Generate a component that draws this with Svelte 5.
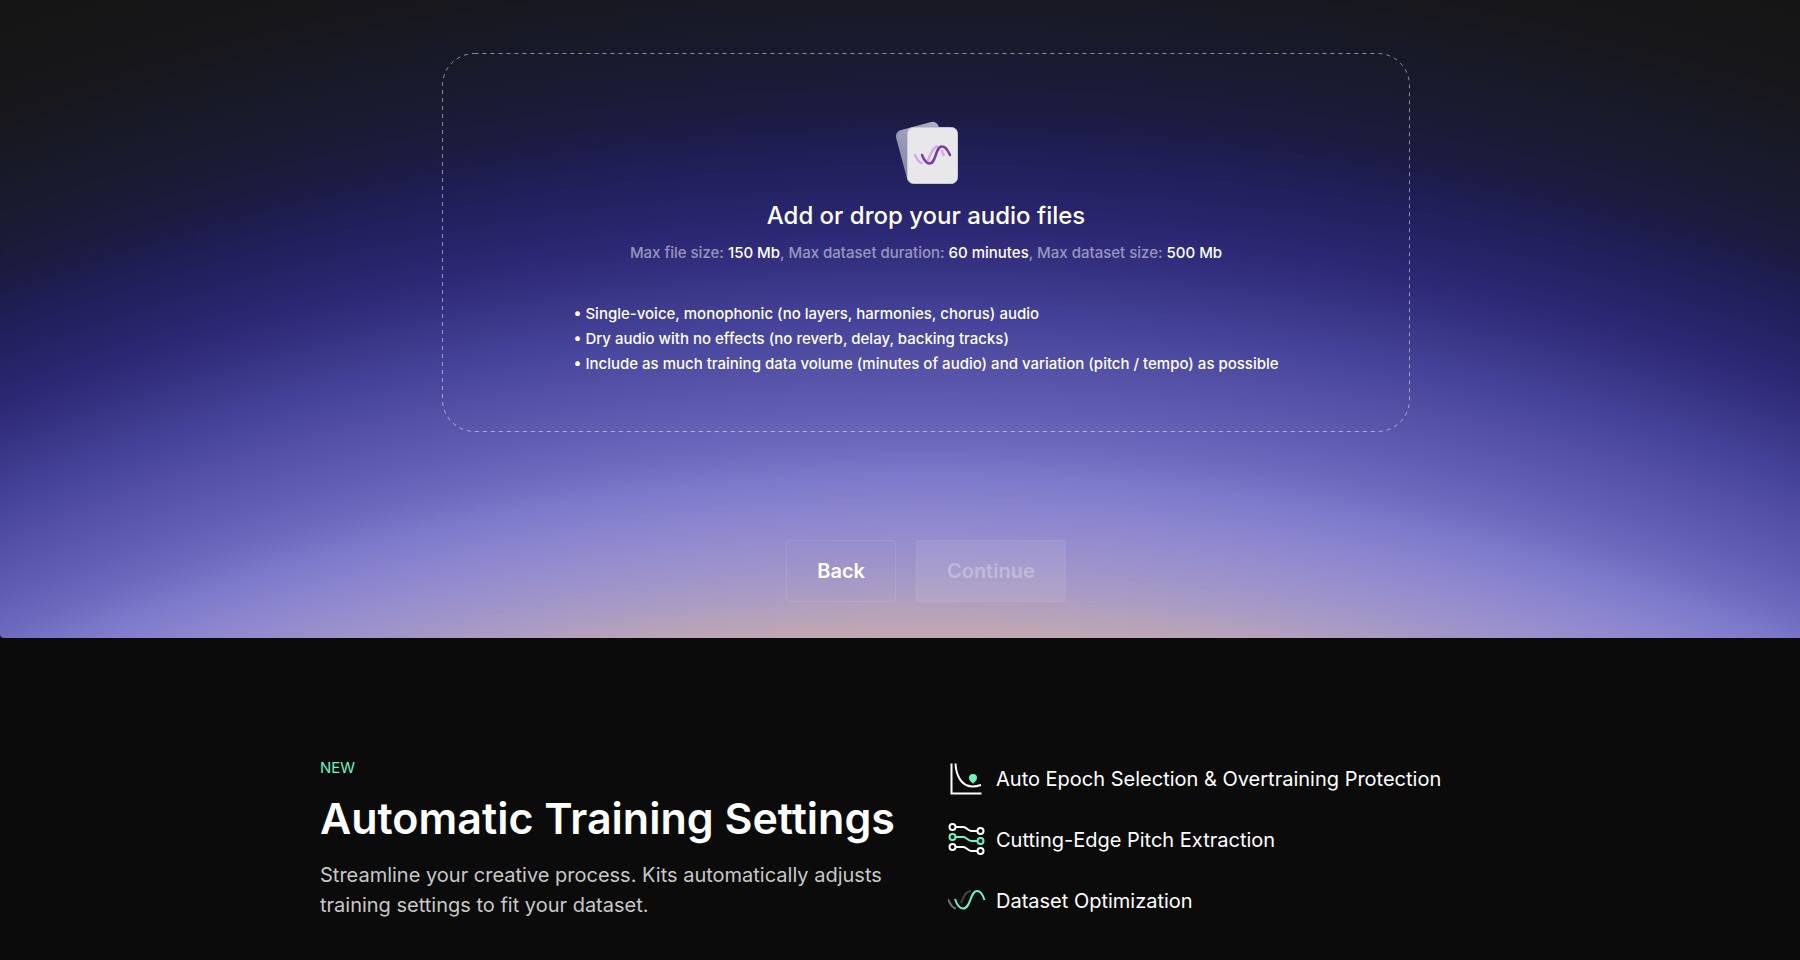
<script lang="ts">
  let files: FileList | undefined = $state();

  const limits = [
    { label: 'Max file size:', value: '150 Mb' },
    { label: 'Max dataset duration:', value: '60 minutes' },
    { label: 'Max dataset size:', value: '500 Mb' },
  ];

  const tips = [
    'Single-voice, monophonic (no layers, harmonies, chorus) audio',
    'Dry audio with no effects (no reverb, delay, backing tracks)',
    'Include as much training data volume (minutes of audio) and variation (pitch / tempo) as possible',
  ];

  const features = [
    { icon: 'curve', text: 'Auto Epoch Selection & Overtraining Protection' },
    { icon: 'nodes', text: 'Cutting-Edge Pitch Extraction' },
    { icon: 'wave', text: 'Dataset Optimization' },
  ];
</script>

<main>
  <section class="hero">
    <div class="dropzone">
      <svg class="outline" aria-hidden="true">
        <rect x="0.5" y="0.5" rx="32" />
      </svg>
      <svg width="68" height="66" viewBox="-4 0 68 66" aria-hidden="true">
        <defs>
          <linearGradient id="card-fade" x1="1" y1="0" x2="0" y2="1">
            <stop offset="0" stop-color="#b3b1c9" />
            <stop offset="1" stop-color="#8381a6" />
          </linearGradient>
        </defs>
        <rect x="5" y="5" width="44" height="54" rx="6" transform="rotate(-15 28 33)" fill="url(#card-fade)" />
        <rect x="11.5" y="7.5" width="50" height="56" rx="6" class="card-front" />
        <path class="wave-light" d="M19 35c2 4 3 7 6.5 8M32 40c3-6 4-12 9-13.5M46 31l1.5 4" />
        <path class="wave-dark" d="M26 35c2 5 4 8.5 7.5 8.5C40.5 43.5 39 26.5 46 26.5c4 0 6 4 8 8.5" />
      </svg>
      <label class="title" for="audio-files">Add or drop your audio files</label>
      <input id="audio-files" class="file-input" type="file" accept="audio/*" multiple bind:files />
      <p class="limits">
        {#each limits as limit, i}{i > 0 ? ', ' : ''}{limit.label} <strong>{limit.value}</strong>{/each}
      </p>
      <ul class="tips">
        {#each tips as tip}
          <li>{tip}</li>
        {/each}
      </ul>
    </div>
    <div class="actions">
      <button class="btn">Back</button>
      <button class="btn btn-primary" disabled={!files?.length}>Continue</button>
    </div>
  </section>

  <section class="info">
    <div class="intro">
      <span class="tag">NEW</span>
      <h2>Automatic Training Settings</h2>
      <p>Streamline your creative process. Kits automatically adjusts training settings to fit your dataset.</p>
    </div>
    <ul class="features">
      {#each features as feature}
        <li>
          <svg width="38" height="36" viewBox="0 0 38 36" aria-hidden="true">
            {#if feature.icon === 'curve'}
              <path class="line" d="M3.5 2.5v30h30" />
              <path class="line" d="M7.5 2.5C8 14 13 25 24 25.5c4 .2 6-.5 9-1.5" />
              <path class="pin" d="M25 13a4 4 0 0 1 4 4c0 2.5-2.2 3.5-4 5.8-1.8-2.3-4-3.3-4-5.8a4 4 0 0 1 4-4z" />
            {:else if feature.icon === 'nodes'}
              {#each [5, 15, 25] as y, i}
                <g class="line" class:green={i === 1}>
                  <circle cx="4.5" cy={y} r="3" />
                  <circle cx="32.5" cy={y + 4} r="3" />
                  <path d="M7.5 {y}h8c3 0 4 4 8 4h6" />
                </g>
              {/each}
            {:else}
              <path class="line ghost" d="M0 16c2 5 4 9 8 9.5" />
              <path class="line ghost dim" d="M13 20c3-7 5-12 10-12" />
              <path class="line green" d="M7 16c2 6 5 9.5 8 9.5C23 25.5 22 8 29 8c4 0 6 4 7.5 9" />
            {/if}
          </svg>
          <span>{feature.text}</span>
        </li>
      {/each}
    </ul>
  </section>
</main>

<style>
  :global(body) {
    margin: 0;
    background: #0b0b0b;
  }

  main {
    font-family: Inter, 'Liberation Sans', sans-serif;
    color: #fff;
  }

  .hero {
    display: flex;
    flex-direction: column;
    align-items: center;
    gap: 108px;
    padding: 53px 0 36px 52px;
    border-bottom-left-radius: 4px;
    background: radial-gradient(
      circle at calc(50% + 26px) 2780px,
      #c2a8b2 2143px,
      #b7a3b9 2165px,
      #aa9cc3 2188px,
      #9a90cd 2229px,
      #8b85cf 2270px,
      #7c78ca 2305px,
      #6e6abe 2335px,
      #615db3 2372px,
      #5451a6 2413px,
      #454399 2462px,
      #3c398b 2494px,
      #332f7e 2525px,
      #2c2874 2551px,
      #28246a 2576px,
      #22205e 2611px,
      #1e1d50 2641px,
      #1c1b40 2671px,
      #1a1a30 2726px,
      #181927 2768px,
      #17171b 2828px,
      #151515 2910px
    );
  }

  .dropzone {
    position: relative;
    box-sizing: border-box;
    width: 968px;
    max-width: 100%;
    padding: 67px 20px 56px;
    display: flex;
    flex-direction: column;
    align-items: center;
  }

  .outline {
    position: absolute;
    inset: 0;
    width: 100%;
    height: 100%;
    pointer-events: none;
  }

  .outline rect {
    width: calc(100% - 1px);
    height: calc(100% - 1px);
    fill: none;
    stroke: rgba(255, 255, 255, 0.5);
    stroke-dasharray: 4 4;
  }

  .card-front {
    fill: #e8e7ea;
    stroke: #c9c8d4;
  }

  .wave-light,
  .wave-dark {
    fill: none;
    stroke-width: 2.5;
    stroke-linecap: round;
  }

  .wave-light {
    stroke: #d6a8ee;
  }

  .wave-dark {
    stroke: #7b3aa8;
  }

  .title {
    margin-top: 12px;
    font-size: 24px;
    line-height: 36px;
    font-weight: 500;
    cursor: pointer;
  }

  .file-input {
    position: absolute;
    width: 1px;
    height: 1px;
    opacity: 0;
  }

  .limits {
    margin: 7px 0 0;
    font-size: 15px;
    line-height: 24px;
    font-weight: 500;
    color: rgba(255, 255, 255, 0.5);
  }

  .limits strong {
    font-weight: 500;
    color: #fff;
  }

  .tips {
    margin: 36px 0 0;
    padding: 0;
    list-style: none;
    font-size: 15px;
    line-height: 25px;
    font-weight: 500;
  }

  .tips li::before {
    content: '• ';
  }

  .actions {
    display: flex;
    gap: 20px;
  }

  .btn {
    height: 62px;
    padding: 0 30px;
    border: 1px solid rgba(255, 255, 255, 0.1);
    border-radius: 4px;
    background: transparent;
    color: #fff;
    font: 600 20px/30px Inter, 'Liberation Sans', sans-serif;
    cursor: pointer;
  }

  .btn-primary {
    border-color: rgba(255, 255, 255, 0.04);
    background: rgba(255, 255, 255, 0.08);
  }

  .btn:disabled {
    color: rgba(255, 255, 255, 0.3);
    cursor: default;
  }

  .info {
    display: grid;
    grid-template-columns: 1fr 1fr;
    gap: 44px;
    max-width: 1212px;
    margin: 0 auto;
    padding: 118px 0 40px 52px;
  }

  .tag {
    display: block;
    font-size: 15px;
    line-height: 24px;
    color: #6df5c0;
  }

  h2 {
    margin: 8px 0 0;
    font-size: 43px;
    line-height: 60px;
    font-weight: 600;
    white-space: nowrap;
  }

  .intro p {
    margin: 12px 0 0;
    font-size: 20px;
    line-height: 30px;
    color: #c8c8c8;
  }

  .features {
    display: flex;
    flex-direction: column;
    gap: 25px;
    margin: 0;
    padding: 5px 0 0;
    list-style: none;
    font-size: 20px;
    line-height: 30px;
  }

  .features li {
    display: flex;
    align-items: center;
    gap: 10px;
    white-space: nowrap;
  }

  .line {
    fill: none;
    stroke: #fff;
    stroke-width: 2;
  }

  .green {
    stroke: #6df5c0;
  }

  .ghost {
    stroke: #77707c;
  }

  .dim {
    stroke: #454148;
  }

  .pin {
    fill: #6df5c0;
  }
</style>
